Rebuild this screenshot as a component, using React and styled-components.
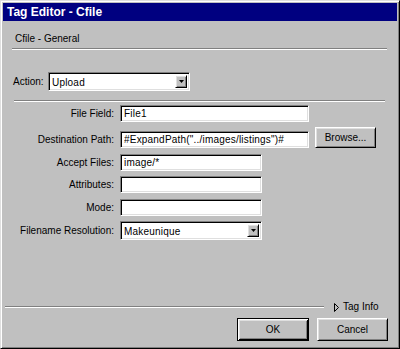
import React from "react";
import styled, { createGlobalStyle, css } from "styled-components";

const Global = createGlobalStyle`
  html, body { margin: 0; padding: 0; background: #c0c0c0; }
  body { font-family: "Liberation Sans", Arial, sans-serif; }
`;

const Window = styled.div`
  box-sizing: border-box;
  width: 400px;
  height: 349px;
  background: #c0c0c0;
  border: 1px solid;
  border-color: #dfdfdf #000 #000 #dfdfdf;
  box-shadow: inset 1px 1px #fff, inset -1px -1px #808080;
  padding: 2px;
  display: flex;
  flex-direction: column;
  font-family: "Liberation Sans", Arial, sans-serif;
  font-size: 10px;
  color: #000;
`;

const TitleBar = styled.div`
  height: 18px;
  flex: 0 0 18px;
  background: #000080;
  color: #fff;
  font-weight: bold;
  font-size: 12px;
  display: flex;
  align-items: center;
  padding-left: 4px;
`;

const Content = styled.div`
  flex: 1;
  display: flex;
  flex-direction: column;
`;

const Heading = styled.div`
  line-height: 12px;
  margin: 12px 0 0 12px;
`;

const Separator = styled.div`
  box-sizing: border-box;
  height: 2px;
  width: ${(p) => p.$width}px;
  margin-left: ${(p) => p.$left || 0}px;
  margin-top: ${(p) => p.$top || 0}px;
  border-top: 1px solid #808080;
  border-bottom: 1px solid #fff;
  flex: 0 0 auto;
`;

const ActionRow = styled.div`
  display: flex;
  align-items: center;
  margin: 22px 0 0 10px;
`;

const InlineLabel = styled.span`
  width: ${(p) => p.$width}px;
  line-height: 19px;
`;

const sunken = css`
  box-sizing: border-box;
  background: #fff;
  border: 1px solid;
  border-color: #808080 #fff #fff #808080;
  box-shadow: inset 1px 1px #000, inset -1px -1px #dfdfdf;
`;

const raised = css`
  box-sizing: border-box;
  background: #c0c0c0;
  border: 1px solid;
  border-color: #fff #000 #000 #fff;
  box-shadow: inset 1px 1px #dfdfdf, inset -1px -1px #808080;
`;

const SelectBox = styled.div`
  ${sunken};
  width: ${(p) => p.$width}px;
  height: 19px;
  padding: 2px;
  display: flex;
  align-items: stretch;
`;

const SelectValue = styled.span`
  flex: 1;
  line-height: 15px;
  padding-left: 1px;
  letter-spacing: 0.2px;
`;

const DropButton = styled.span`
  ${raised};
  width: 12px;
  display: flex;
  align-items: center;
  justify-content: center;
`;

const FieldRow = styled.div`
  display: grid;
  grid-template-columns: 111px auto;
  column-gap: 6px;
  align-items: end;
  justify-content: start;
  margin-top: ${(p) => p.$top}px;
`;

const FieldLabel = styled.label`
  text-align: right;
  line-height: ${(p) => p.$h || 17}px;
  white-space: nowrap;
`;

const TextInput = styled.input`
  ${sunken};
  width: ${(p) => p.$width}px;
  height: 17px;
  padding: 0 3px;
  margin: 0;
  font: inherit;
  font-size: 10px;
  letter-spacing: 0.2px;
  color: #000;
  outline: none;
`;

const InputGroup = styled.div`
  display: flex;
  align-items: flex-end;
  gap: 6px;
`;

const Button = styled.button`
  ${raised};
  width: ${(p) => p.$width}px;
  height: ${(p) => p.$height}px;
  padding: 0;
  margin: 0;
  font: inherit;
  font-size: 10px;
  color: #000;
  cursor: default;
  ${(p) =>
    p.$default &&
    css`
      border: 1px solid #000;
      box-shadow: inset 1px 1px #fff, inset -1px -1px #000,
        inset 2px 2px #dfdfdf, inset -2px -2px #808080;
    `}
`;

const Footer = styled.div`
  margin-top: auto;
  display: flex;
  flex-direction: column;
  padding-bottom: 5px;
`;

const InfoRow = styled.div`
  display: flex;
  align-items: center;
  height: 12px;
  padding-left: 2px;
`;

const TagInfo = styled.span`
  display: flex;
  align-items: center;
  gap: 4px;
  margin-left: 10px;
  line-height: 12px;
`;

const ButtonRow = styled.div`
  display: flex;
  justify-content: flex-end;
  gap: 8px;
  padding-right: 9px;
  margin-top: 5px;
`;

const DownArrow = () => (
  <svg width="5" height="3" viewBox="0 0 5 3">
    <polygon points="0,0 5,0 2.5,3" fill="#000" />
  </svg>
);

const RightOutline = () => (
  <svg width="5" height="9" viewBox="0 0 5 9">
    <polygon points="0.5,0.5 4.5,4.5 0.5,8.5" fill="none" stroke="#000" strokeWidth="1" />
  </svg>
);

const Select = ({ width, value }) => (
  <SelectBox $width={width}>
    <SelectValue>{value}</SelectValue>
    <DropButton>
      <DownArrow />
    </DropButton>
  </SelectBox>
);

export default function App() {
  return (
    <>
      <Global />
      <Window>
        <TitleBar>Tag Editor - Cfile</TitleBar>
        <Content>
          <Heading>Cfile - General</Heading>
          <Separator $width={375} $left={9} $top={3} />
          <ActionRow>
            <InlineLabel $width={35}>Action:</InlineLabel>
            <Select width={142} value="Upload" />
          </ActionRow>
          <Separator $width={371} $left={11} $top={9} />

          <FieldRow $top={3}>
            <FieldLabel>File Field:</FieldLabel>
            <TextInput $width={189} readOnly value="File1" />
          </FieldRow>
          <FieldRow $top={5}>
            <FieldLabel>Destination Path:</FieldLabel>
            <InputGroup>
              <TextInput
                $width={189}
                readOnly
                value={'#ExpandPath("../images/listings")#'}
              />
              <Button $width={61} $height={21}>
                Browse...
              </Button>
            </InputGroup>
          </FieldRow>
          <FieldRow $top={6}>
            <FieldLabel>Accept Files:</FieldLabel>
            <TextInput $width={142} readOnly value="image/*" />
          </FieldRow>
          <FieldRow $top={5}>
            <FieldLabel>Attributes:</FieldLabel>
            <TextInput $width={142} readOnly value="" />
          </FieldRow>
          <FieldRow $top={6}>
            <FieldLabel>Mode:</FieldLabel>
            <TextInput $width={142} readOnly value="" />
          </FieldRow>
          <FieldRow $top={5}>
            <FieldLabel $h={19}>Filename Resolution:</FieldLabel>
            <Select width={142} value="Makeunique" />
          </FieldRow>

          <Footer>
            <InfoRow>
              <Separator $width={319} />
              <TagInfo>
                <RightOutline />
                Tag Info
              </TagInfo>
            </InfoRow>
            <ButtonRow>
              <Button $default $width={72} $height={23}>
                OK
              </Button>
              <Button $width={71} $height={23}>
                Cancel
              </Button>
            </ButtonRow>
          </Footer>
        </Content>
      </Window>
    </>
  );
}
